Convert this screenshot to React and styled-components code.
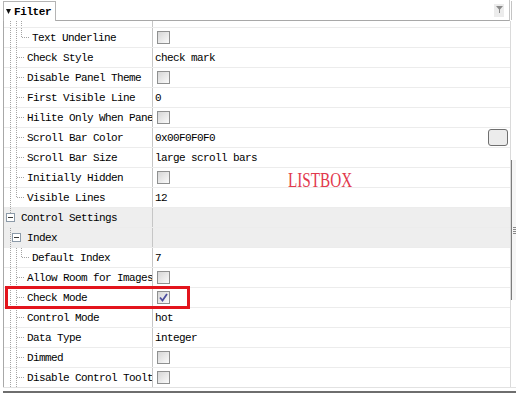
import React from 'react';
import styled, { createGlobalStyle } from 'styled-components';

const MONO = `"Liberation Mono", "DejaVu Sans Mono", monospace`;

const GlobalStyle = createGlobalStyle`
  html, body {
    margin: 0;
    padding: 0;
    background: #fff;
  }
  body {
    width: 516px;
    height: 394px;
    overflow: hidden;
  }
`;

// tree guide x positions (page coordinates)
const A = 10;
const B = 16;
const C = 21;

const rows = [
  { label: 'Text Underline', textX: 32, lines: [[A], [B], [C, 10]], branch: C, value: { check: false } },
  { label: 'Check Style', textX: 27, lines: [[A], [B]], branch: B, value: { text: 'check mark' } },
  { label: 'Disable Panel Theme', textX: 27, lines: [[A], [B]], branch: B, value: { check: false } },
  { label: 'First Visible Line', textX: 27, lines: [[A], [B]], branch: B, value: { text: '0' } },
  { label: 'Hilite Only When Pane', textX: 27, lines: [[A], [B]], branch: B, value: { check: false } },
  { label: 'Scroll Bar Color', textX: 27, lines: [[A], [B]], branch: B, value: { text: '0x00F0F0F0', button: true } },
  { label: 'Scroll Bar Size', textX: 27, lines: [[A], [B]], branch: B, value: { text: 'large scroll bars' } },
  { label: 'Initially Hidden', textX: 27, lines: [[A], [B]], branch: B, value: { check: false } },
  { label: 'Visible Lines', textX: 27, lines: [[A], [B, 10]], branch: B, value: { text: '12' } },
  { label: 'Control Settings', textX: 21, lines: [[A, 6]], box: A, group: true, value: {} },
  { label: 'Index', textX: 27, lines: [[A]], box: B, group: true, value: {} },
  { label: 'Default Index', textX: 32, lines: [[A], [B], [C, 10]], branch: C, value: { text: '7' } },
  { label: 'Allow Room for Images', textX: 27, lines: [[A], [B]], branch: B, value: { check: false } },
  { label: 'Check Mode', textX: 27, lines: [[A], [B]], branch: B, value: { check: true } },
  { label: 'Control Mode', textX: 27, lines: [[A], [B]], branch: B, value: { text: 'hot' } },
  { label: 'Data Type', textX: 27, lines: [[A], [B]], branch: B, value: { text: 'integer' } },
  { label: 'Dimmed', textX: 27, lines: [[A], [B]], branch: B, value: { check: false } },
  { label: 'Disable Control Toolt', textX: 27, lines: [[A], [B]], branch: B, value: { check: false } },
];

const Page = styled.div`
  position: relative;
  width: 516px;
  height: 394px;
  background: #fff;
  font-family: ${MONO};
  font-size: 11px;
  letter-spacing: -0.6px;
  color: #000;
  overflow: hidden;
`;

const Header = styled.div`
  display: flex;
  height: 21px;
`;

const FilterTab = styled.div`
  display: flex;
  align-items: center;
  gap: 3px;
  margin-left: 3px;
  margin-top: 1px;
  width: 49px;
  padding-left: 2px;
  border: 1px solid #b4b4b4;
  border-bottom: none;
  font-weight: bold;
  letter-spacing: -0.4px;
`;

const FilterInput = styled.div`
  flex: 1;
  display: flex;
  align-items: center;
  justify-content: flex-end;
  margin-right: 6px;
  padding-right: 5px;
  border-bottom: 1px solid #a8a8a8;
  border-right: 1px solid #c4c4c4;
  box-shadow: 2px 0 0 -1px #fff, 3px 0 0 -1px #c4c4c4;
`;

const FunnelButton = styled.div`
  display: flex;
  align-items: center;
  justify-content: center;
  width: 10px;
  height: 13px;
  background: #ececec;
`;

const Main = styled.div`
  display: flex;
`;

const Body = styled.div`
  width: 506px;
  margin-left: 3px;
  border-left: 1px solid #a8a8a8;
`;

const Row = styled.div`
  display: grid;
  grid-template-columns: 148px 1px 1fr;
  height: ${(p) => (p.$partial ? 6 : 20)}px;
  box-sizing: border-box;
  border-top: ${(p) => (p.$partial ? 'none' : '1px solid #ececec')};
  background: ${(p) => (p.$group ? '#eeeeee' : '#fff')};
  overflow: hidden;
`;

const LabelCell = styled.div`
  display: flex;
  align-items: center;
  overflow: hidden;
  white-space: nowrap;
`;

const LabelText = styled.span`
  padding-left: 2px;
`;

const Divider = styled.div`
  background: #c6c6c6;
`;

const ValueCell = styled.div`
  display: flex;
  align-items: center;
  justify-content: space-between;
  padding: 0 2px;
  white-space: nowrap;
`;

const Box = styled.div`
  display: flex;
  align-items: center;
  justify-content: center;
  width: 13px;
  height: 13px;
  margin-left: 2px;
  box-sizing: border-box;
  border: 1px solid #8f9090;
  background: linear-gradient(135deg, #d6d6d6 0%, #eaeaea 55%, #fbfbfb 100%);
`;

const ColorButton = styled.div`
  width: 20px;
  height: 17px;
  box-sizing: border-box;
  border: 1px solid #6f6f6f;
  border-radius: 3px;
  background: #ececec;
`;

const VScroll = styled.div`
  width: 6px;
  box-sizing: border-box;
  border-left: 1px solid #dadada;
  padding-top: 139px;
`;

const Thumb = styled.div`
  display: flex;
  align-items: center;
  height: 140px;
  border-left: 1px solid #7c7c7c;
  background: #f6f6f6;
`;

const Grip = styled.div`
  width: 3px;
  height: 7px;
  margin-left: 1px;
  background: repeating-linear-gradient(#8a8a8a 0 1px, transparent 1px 2px);
`;

const HScroll = styled.div`
  height: 3px;
  border-top: 1px solid #e2e2e2;
  border-bottom: 2px solid #6e6e6e;
  margin-left: 3px;
`;

const ListboxNote = styled.div`
  position: absolute;
  left: 288px;
  top: 169px;
  font-family: "Liberation Serif", serif;
  font-size: 20px;
  letter-spacing: 0;
  color: #e2394d;
  transform: scaleX(0.76);
  transform-origin: left top;
`;

const Highlight = styled.div`
  position: absolute;
  left: 5px;
  top: 286px;
  width: 185px;
  height: 23px;
  box-sizing: border-box;
  border: 3px solid #e3141c;
`;

function Guides({ width, lines = [], branch, box, height = 19 }) {
  const dot = { stroke: '#a4a4a4', strokeDasharray: '1 1', strokeWidth: 1 };
  return (
    <svg width={width} height={height} style={{ flex: 'none' }} shapeRendering="crispEdges">
      {lines.map(([x, end], i) => (
        <line key={i} x1={x - 4 + 0.5} y1={0} x2={x - 4 + 0.5} y2={end ?? height} {...dot} />
      ))}
      {branch != null && (
        <line x1={branch - 4 + 1} y1={9.5} x2={width} y2={9.5} {...dot} />
      )}
      {box != null && (
        <g>
          <rect x={box - 4 - 4 + 0.5} y={5.5} width={8} height={8} fill="#fff" stroke="#8c9aa8" />
          <line x1={box - 4 - 2} y1={9.5} x2={box - 4 + 3} y2={9.5} stroke="#3a3a3a" />
        </g>
      )}
    </svg>
  );
}

function Check() {
  return (
    <svg width="9" height="9" viewBox="0 0 9 9">
      <path d="M1 4.5 L3.5 7.5 L8 1" fill="none" stroke="#4d4f9e" strokeWidth="1.8" />
    </svg>
  );
}

function Funnel() {
  return (
    <svg width="7" height="8" viewBox="0 0 7 8">
      <path d="M0 0 H7 L4 3.5 V7 H3 V3.5 Z" fill="#8a8a8a" />
    </svg>
  );
}

function Value({ value }) {
  return (
    <ValueCell>
      {value.check != null && <Box>{value.check && <Check />}</Box>}
      {value.text && <span>{value.text}</span>}
      {value.button && <ColorButton />}
    </ValueCell>
  );
}

export default function App() {
  return (
    <Page>
      <GlobalStyle />
      <Header>
        <FilterTab>
          <svg width="5" height="5" viewBox="0 0 5 5">
            <path d="M0 0 H5 L2.5 5 Z" fill="#111" />
          </svg>
          Filter
        </FilterTab>
        <FilterInput>
          <FunnelButton>
            <Funnel />
          </FunnelButton>
        </FilterInput>
      </Header>
      <Main>
        <Body>
          <Row $partial>
            <LabelCell>
              <Guides width={30} height={6} lines={[[A], [B], [C]]} />
            </LabelCell>
            <Divider />
            <div />
          </Row>
          {rows.map((r) => (
            <Row key={r.label} $group={r.group}>
              <LabelCell>
                <Guides width={r.textX - 4 - 2} lines={r.lines} branch={r.branch} box={r.box} />
                <LabelText>{r.label}</LabelText>
              </LabelCell>
              <Divider />
              <Value value={r.value} />
            </Row>
          ))}
        </Body>
        <VScroll>
          <Thumb>
            <Grip />
          </Thumb>
        </VScroll>
      </Main>
      <HScroll />
      <ListboxNote>LISTBOX</ListboxNote>
      <Highlight />
    </Page>
  );
}
